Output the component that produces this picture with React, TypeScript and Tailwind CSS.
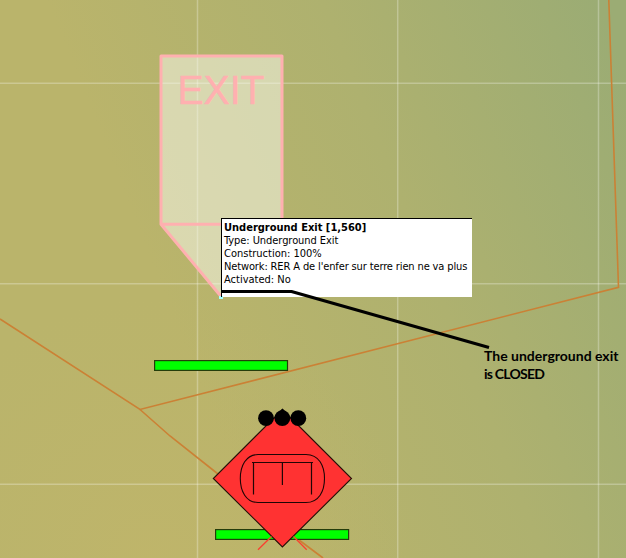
const gridX = [197.5, 397.7, 598.5];
const gridY = [83.3, 283.8, 484.3];

const details = [
  { text: "Type: Underground Exit", spacing: "tracking-[-0.06px]" },
  { text: "Construction: 100%", spacing: "tracking-[0px]" },
  { text: "Network: RER A de l'enfer sur terre rien ne va plus", spacing: "tracking-[-0.13px]" },
  { text: "Activated: No", spacing: "tracking-[0px]" },
];

function MapCanvas() {
  return (
    <svg className="absolute inset-0" width="626" height="558" viewBox="0 0 626 558">
      <defs>
        <linearGradient id="land" gradientUnits="userSpaceOnUse" x1="170" y1="310" x2="646" y2="120">
          <stop offset="0" stopColor="#bab46b" />
          <stop offset="0.5" stopColor="#aeb16f" />
          <stop offset="1" stopColor="#9bac74" />
        </linearGradient>
        <radialGradient id="sand" gradientUnits="userSpaceOnUse" cx="150" cy="558" r="260">
          <stop offset="0" stopColor="#c0b56a" stopOpacity="0.8" />
          <stop offset="1" stopColor="#bdb56b" stopOpacity="0" />
        </radialGradient>
      </defs>
      <rect width="626" height="558" fill="url(#land)" />
      <rect width="626" height="558" fill="url(#sand)" />

      <g stroke="#ffffff" strokeOpacity="0.27" strokeWidth="1.5">
        {gridX.map((x) => <line key={x} x1={x} x2={x} y1="0" y2="558" />)}
        {gridY.map((y) => <line key={y} x1="0" x2="626" y1={y} y2={y} />)}
      </g>

      <g fill="none" stroke="#cb8135" strokeWidth="1.6">
        <path d="M608.8 0L618.5 287.3L140 409.5L0 319" />
        <path d="M140 409.5L170 436L218 474M299 540L323 558" />
      </g>

      <path d="M161 56H282V224.3L221.5 297L161 224.3Z" fill="#fcfdf4" fillOpacity="0.5" />
      <path d="M161 224.3V56H282V224.3H161L221.5 297L282 224.3" fill="none" stroke="#ffb0b0" strokeWidth="3" strokeLinejoin="round" />
      <text x="177.5" y="104" fontSize="40.5" textLength="87" lengthAdjust="spacingAndGlyphs" fill="#ffb0b0" stroke="#ffb0b0" strokeWidth="0.5" fontFamily="'Liberation Sans', sans-serif">EXIT</text>

      <g fill="#00ff00" stroke="#243d0b" strokeWidth="1.2">
        <rect x="154.6" y="360.6" width="132.9" height="9.8" />
        <rect x="215.6" y="529.6" width="133" height="9.8" />
      </g>

      <path d="M282.4 409.5L351.5 478.5L282.4 547L213.3 478.5Z" fill="#ff3232" stroke="#241008" strokeWidth="1.1" />
      <path d="M271.5 536.5L258 549.8M293.5 536.5L306.7 549.8" stroke="#fa4030" strokeWidth="1.3" />
      <circle cx="266" cy="418.2" r="7.9" />
      <circle cx="282.3" cy="418.2" r="7.9" />
      <circle cx="298.3" cy="418.2" r="7.9" />
      <path d="M277 414L282.4 408.5L288 414Z" />
      <path d="M258 454.5H306C319 454.5 324.5 466 324.5 478.5C324.5 491 319 502.5 306 502.5H258C246 502.5 240.3 491 240.3 478.5C240.3 466 246 454.5 258 454.5Z" fill="none" stroke="#1d0505" strokeWidth="1.1" />
      <path d="M252 462.5H313M253.5 462.5V494.5M282.4 462.5V485M311.5 462.5V494.5" fill="none" stroke="#210505" strokeWidth="1.2" />
    </svg>
  );
}

function ExitTooltip() {
  return (
    <div className="absolute left-[221px] top-[218px] h-[79px] w-[251px] border-l border-t border-black bg-white pl-[2px] pt-[2px] font-['DejaVu_Sans_Condensed','DejaVu_Sans',sans-serif] text-[11px] leading-[13px] whitespace-nowrap text-black">
      <div className="font-bold">Underground Exit [1,560]</div>
      {details.map((line) => <div key={line.text} className={line.spacing}>{line.text}</div>)}
    </div>
  );
}

export default function App() {
  return (
    <main className="relative h-[558px] w-[626px] overflow-hidden bg-[#b8b36b]">
      <MapCanvas />
      <ExitTooltip />
      <svg className="absolute inset-0" width="626" height="558" viewBox="0 0 626 558">
        <rect x="219" y="296" width="4" height="3" fill="#a8ffff" />
        <path d="M221.5 218V297" stroke="#000" strokeWidth="1" />
        <path d="M222 291.5H291.5L489 347.5" fill="none" stroke="#000" strokeWidth="3" strokeLinejoin="round" />
      </svg>
      <div className="absolute left-[484px] top-[347px] font-[Lato,sans-serif] text-[14px] leading-[18px] font-bold whitespace-nowrap text-black">
        <div>The underground exit</div>
        <div className="tracking-[-0.75px]">is CLOSED</div>
      </div>
    </main>
  );
}
